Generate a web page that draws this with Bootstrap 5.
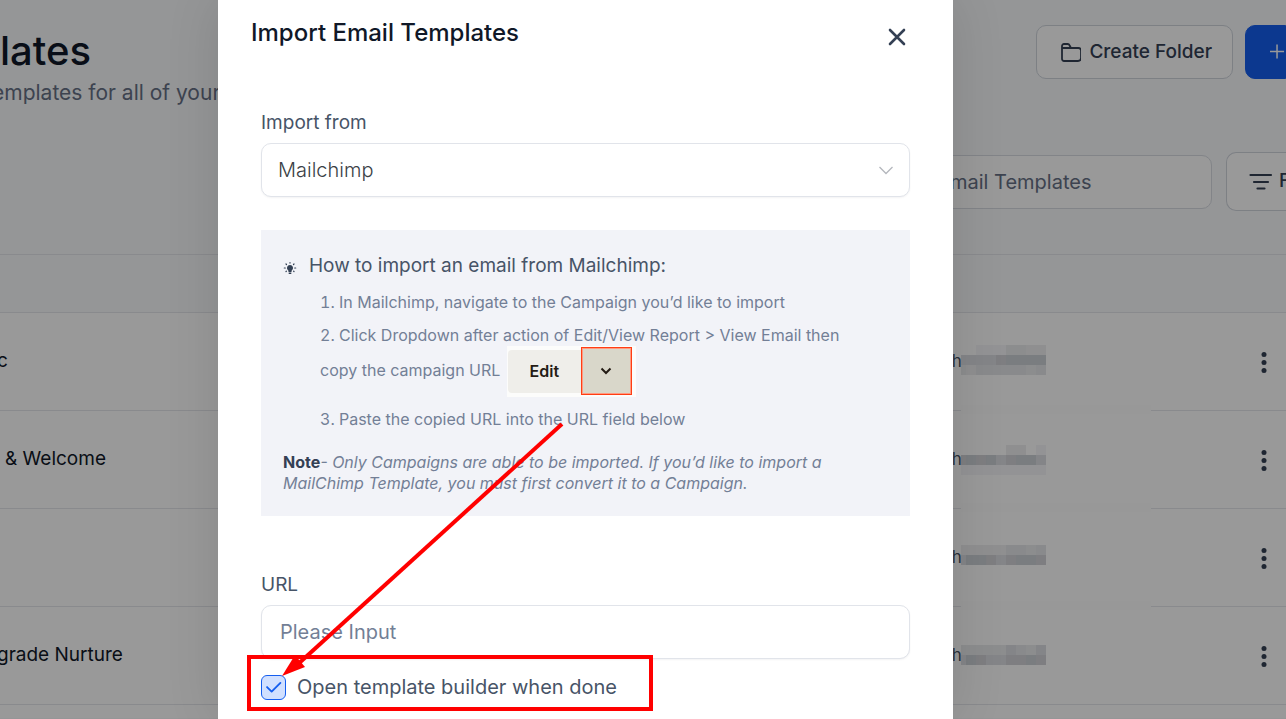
<!DOCTYPE html>
<html lang="en">
<head>
<meta charset="utf-8">
<meta name="viewport" content="width=device-width, initial-scale=1">
<title>Import Email Templates</title>
<link href="https://cdn.jsdelivr.net/npm/bootstrap@5.3.0/dist/css/bootstrap.min.css" rel="stylesheet">
<style>
  body { font-family: Inter, "Liberation Sans", sans-serif; background: #f8fafc; color: #101828; min-height: 100vh; overflow: hidden; }

  /* Page behind the dialog */
  .page-top { padding-top: 25px; }
  .page-title { font-size: 40px; line-height: 52px; font-weight: 500; color: #101828; }
  .page-sub { font-size: 21px; line-height: 32px; color: #667085; text-indent: -8px; }
  .tool-btn { height: 54px; padding: 0 20px; font-size: 19px; font-weight: 500; color: #344054; background: #fff; border: 1px solid #d0d5dd; border-radius: 10px; }
  .tool-primary { width: 41px; padding: 0 0 0 24px; background: #155eef; border-color: #155eef; border-radius: 10px 0 0 10px; }
  .tool-filter { width: 60px; height: 59px; padding: 0 0 0 22px; gap: 6px; border-right: 0; border-radius: 10px 0 0 10px; }
  .search-box { width: 290px; height: 54px; font-size: 20px; border: 1px solid #d9dce3; border-radius: 10px; padding-left: 27px; }
  .search-box::placeholder { color: #667085; }
  .search-row { margin-top: 43px; gap: 14px; }
  .tpl-table { margin-top: 43px; table-layout: fixed; font-size: 19px; border-top: 1px solid #e4e7ec; }
  .tpl-table th { height: 58px; padding: 0; background: #f8fafc; border-color: #e4e7ec; }
  .tpl-table td { height: 98px; padding: 0; vertical-align: middle; color: #101828; background: #fff; border-color: #e4e7ec; }
  .tpl-table tfoot td { height: 13px; border: 0; }
  .tpl-table .tpl-name { text-indent: -3px; }
  .tpl-table .col-owner { width: 26%; }
  .owner-cell { height: 97px; padding-right: 12px; font-size: 17px; }
  .owner-cell span { width: 9px; overflow: hidden; color: #475467; }
  .owner-cell .redacted { overflow: visible; }

  .page-shade { background: rgba(0, 0, 0, .4); }
  .dialog-grid { display: grid; grid-template-columns: 218fr 735fr 333fr; }

  /* Dialog */
  .import-dialog { grid-column: 2; background: #fff; min-height: 100vh; box-shadow: 0 0 50px rgba(0, 0, 0, .12); }
  .dialog-head { padding: 20px 44px 0 33px; height: 111px; }
  .dialog-title { font-size: 24px; line-height: 26px; font-weight: 500; color: #101828; }
  .dialog-body { padding: 0 43px; }
  .close-btn { padding: 5px 0; line-height: 0; }
  .field-label { font-size: 19px; line-height: 24px; color: #475467; margin-bottom: 8px; }
  .field-box { height: 54px; font-size: 20px; border: 1px solid #e1e4ea; border-radius: 10px; padding-left: 18px; color: #3b3f46; box-shadow: 0 1px 2px rgba(16, 24, 40, .05); }
  .field-box::placeholder { color: #737f96; }
  .source-select { padding-left: 16px; font-weight: 300; background-size: 18px; background-image: url("data:image/svg+xml,%3Csvg xmlns='http://www.w3.org/2000/svg' viewBox='0 0 18 18'%3E%3Cpath fill='none' stroke='%23b4b7bd' stroke-width='1.300' d='M2.500 6L9 12.500L15.500 6'/%3E%3C/svg%3E"); background-position: right 14px center; }
  .howto { margin-top: 33px; margin-bottom: 57px; padding: 24px 22px 22px; background: #f2f3f8; color: #737f96; font-size: 16px; }
  .howto-title { font-size: 19px; line-height: 24px; font-weight: 400; color: #475467; gap: 12px; }
  .howto ol { list-style-position: inside; margin: 13px 0 22px; padding: 0 24px 0 37px; line-height: 22px; }
  .howto li + li { margin-top: 11px; }
  .howto .note { line-height: 21px; }
  .howto .note strong { color: #344054; }
  .edit-sample { height: 51px; width: 129px; padding: 1px 4px 2px 1px; background: #fcfcfb; vertical-align: middle; margin-left: 2px; }
  .edit-sample button { border: 0; padding: 0; color: #241c15; }
  .edit-sample .edit-main { flex: 1; height: 43px; background: #efeeea; font-size: 16px; font-weight: 600; border-radius: 4px 0 0 4px; }
  .edit-sample .edit-more { width: 51px; height: 48px; background: #d9d7ca; border: 1px solid #ff3d14; outline: 1px solid #ff9a80; outline-offset: -2px; line-height: 0; }
  .builder-check { gap: 11px; margin-top: 15px; font-size: 20px; line-height: 26px; color: #475467; }
  .builder-check .form-check-input { width: 25px; height: 25px; margin: 0; border: 1px solid #155eef; border-radius: 6px; }
  .builder-check .form-check-input:checked { background-color: #d1e0ff; background-size: 100%; background-image: url("data:image/svg+xml,%3Csvg xmlns='http://www.w3.org/2000/svg' viewBox='0 0 25 25'%3E%3Cpath fill='none' stroke='%23155eef' stroke-width='2' stroke-linecap='round' stroke-linejoin='round' d='M5.500 12l5 5L20 7.500'/%3E%3C/svg%3E"); }

  /* Red call-out drawn over the dialog */
  .callout-mark { left: -14px; top: -251px; pointer-events: none; }
</style>
</head>
<body class="position-relative">

<div class="page-top">
  <header class="d-flex justify-content-between align-items-start">
    <div>
      <h1 class="page-title mb-0">lates</h1>
      <p class="page-sub mb-0">emplates for all of your</p>
    </div>
    <div class="d-flex">
      <button type="button" class="tool-btn d-flex align-items-center me-1">
        <svg class="me-2" width="24" height="24" viewBox="1 0 24 24" fill="none" stroke="#344054" stroke-width="1.800" stroke-linejoin="round"><path d="M6 9V6A2 2 0 0 1 8 4h3.500a2 2 0 0 1 2 1.200L15 8h7.500A2.500 2.500 0 0 1 25 10.500v7.500a3 3 0 0 1-3 3H8a2 2 0 0 1-2-2zM6 8h9"/></svg>Create Folder
      </button>
      <button type="button" class="tool-btn tool-primary ms-2 d-flex align-items-center" aria-label="New template">
        <svg width="16" height="16" viewBox="0 0 16 16" stroke="#fff" stroke-width="1.600"><path d="M0 7.500h15M7.500 0v15"/></svg>
      </button>
    </div>
  </header>

  <div class="search-row d-flex justify-content-end align-items-center">
    <input type="search" class="search-box" placeholder="mail Templates" aria-label="Search templates">
    <button type="button" class="tool-btn tool-filter d-flex align-items-center overflow-hidden">
      <svg class="flex-shrink-0" width="24" height="18" viewBox="0 0 24 18" stroke="#344054" stroke-width="2.200" stroke-linecap="round"><path d="M1.500 2h20.500M5 9h14M8.500 15.500h7"/></svg>F
    </button>
  </div>

  <table class="table tpl-table mb-0">
    <colgroup><col><col class="col-owner"></colgroup>
    <thead><tr><th></th><th></th></tr></thead>
    <tbody id="rows"></tbody>
    <tfoot><tr><td></td><td></td></tr></tfoot>
  </table>
</div>

<div class="page-shade dialog-grid position-absolute top-0 start-0 w-100 h-100">
  <section class="import-dialog" role="dialog" aria-labelledby="dlgTitle">
    <div class="dialog-head d-flex justify-content-between align-items-start">
      <h2 class="dialog-title mb-0" id="dlgTitle">Import Email Templates</h2>
      <button type="button" class="btn close-btn" aria-label="Close">
        <svg width="22" height="22" viewBox="0 0 22 22" stroke="#344054" stroke-width="2.600" stroke-linecap="round"><path d="M4 4l14 14M18 4L4 18"/></svg>
      </button>
    </div>
    <div class="dialog-body">
      <label class="field-label d-block" for="source">Import from</label>
      <select class="form-select field-box source-select" id="source"><option>Mailchimp</option></select>

      <div class="howto">
        <h3 class="howto-title d-flex align-items-center mb-0">
          <svg class="mt-1" width="14" height="14" viewBox="0 0 14 14" fill="#344054"><path d="M7 4a3 3 0 0 1 1.700 5.500L8.500 11h-3l-.2-1.500A3 3 0 0 1 7 4zM5.700 11.600h2.600V13H5.700z"/><path stroke="#344054" stroke-width="1.200" stroke-linecap="round" d="M7 1.500v.6M3 3l.5.5M11 3l-.5.5M1.300 7h1M11.700 7h1M3 10.500l.4-.4M11 10.500l-.4-.4"/></svg>
          How to import an email from Mailchimp:
        </h3>
        <ol>
          <li>In Mailchimp, navigate to the Campaign you’d like to import</li>
          <li>Click Dropdown after action of Edit/View Report &gt; View Email then copy the campaign URL
            <span class="edit-sample d-inline-flex align-items-center"><button type="button" class="edit-main">Edit</button><button type="button" class="edit-more" aria-label="More actions"><svg width="12" height="8" viewBox="0 0 12 8" fill="none" stroke="#241c15" stroke-width="2"><path d="M1.500 1.500L6 6l4.500-4.500"/></svg></button></span></li>
          <li>Paste the copied URL into the URL field below</li>
        </ol>
        <p class="note mb-0"><strong>Note</strong><em>- Only Campaigns are able to be imported. If you’d like to import a MailChimp Template, you must first convert it to a Campaign.</em></p>
      </div>

      <label class="field-label d-block" for="url">URL</label>
      <input type="text" class="form-control field-box" id="url" placeholder="Please Input">

      <div class="builder-check d-flex align-items-center position-relative">
        <input class="form-check-input" type="checkbox" id="builder" checked>
        <label for="builder">Open template builder when done</label>
        <svg class="callout-mark position-absolute" width="406" height="289" viewBox="0 0 406 289"><rect x="2" y="234" width="402" height="52" fill="none" stroke="#f00" stroke-width="4"/><path d="M315 1L50 242" stroke="#f00" stroke-width="4"/><path d="M35 253l13-21 10 12z" fill="#f00"/></svg>
      </div>
    </div>
  </section>
</div>

<script src="https://cdn.jsdelivr.net/npm/bootstrap@5.3.0/dist/js/bootstrap.bundle.min.js"></script>
<script>
  // Template rows: visible name, owner-name blur blocks (bands of nine cells, toned by letter), offset of the first band
  const rows = [
    { name: 'c', top: 32, bands: ['--aaaccbb', 'eeeefgggg', 'cbdddddcd'], patch: true },
    { name: '&amp; Welcome', indent: true, top: 34, bands: ['-----bb-a', 'fgfgefgge', 'aaaaaaaaa'], patch: true },
    { name: '', top: 36, bands: ['bbbbbddcd', 'eggfefggf'], patch: true },
    { name: 'grade Nurture', top: 38, bands: ['cccccedce', 'egfeeffgf'], patch: false }
  ];
  const tone = { a: '#f6f6f8', b: '#eeeff1', c: '#eaebed', d: '#e4e6e9', e: '#dddee3', f: '#d2d3d7', g: '#cbd0d6' };
  const mosaic = r => r.bands.map((b, y) => [...b].map((c, i) => tone[c]
    ? `<rect x="${i ? i * 10 - 5 : 0}" y="${r.top + y * 10}" width="${i ? 10 : 5}" height="10" fill="${tone[c]}"/>` : '').join('')).join('');
  document.getElementById('rows').innerHTML = rows.map(r => `
    <tr><td class="tpl-name ${r.indent ? 'ps-2' : ''}">${r.name}</td>
    <td><div class="owner-cell d-flex align-items-center">
      <span>h</span>
      <svg class="redacted" width="190" height="97" shape-rendering="crispEdges">${mosaic(r)}${r.patch ? '<rect y="92" width="190" height="9" fill="#fdfdfd"/>' : ''}</svg>
      <button type="button" class="btn p-0 border-0 ms-auto" aria-label="Row menu"><svg width="20" height="24" viewBox="0 0 20 24" fill="#344054"><circle cx="10" cy="4.500" r="2.500"/><circle cx="10" cy="12.500" r="2.500"/><circle cx="10" cy="20.500" r="2.500"/></svg></button>
    </div></td></tr>`).join('');
</script>
</body>
</html>
